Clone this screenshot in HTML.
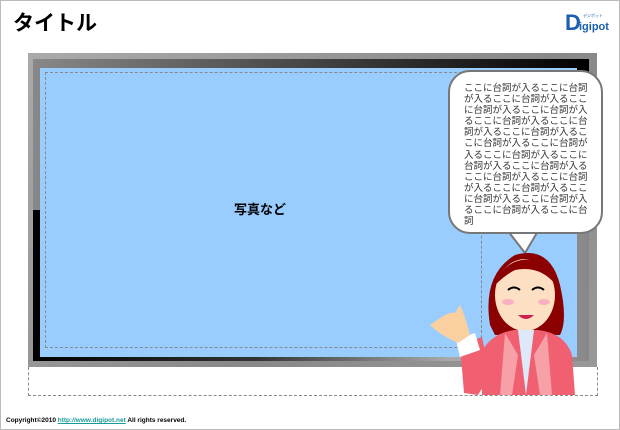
<!DOCTYPE html>
<html><head><meta charset="utf-8"><style>
body{margin:0;width:620px;height:430px;position:relative;overflow:hidden;background:#fff;font-family:"Liberation Sans","Noto Sans CJK JP",sans-serif}
.b{position:absolute;left:0;top:0;width:618px;height:428px;border:1px solid #bbb}
.t{position:absolute;left:13px;top:7px;font-size:21px;font-weight:bold;color:#000}
.frame{position:absolute;left:28px;top:53px;width:569px;height:314px;background:linear-gradient(135deg,#aaa,#888 60%,#999);}
.i1{position:absolute;left:33px;top:59px;width:556px;height:151px;background:linear-gradient(90deg,#888,#444 50%,#000);}
.i2{position:absolute;left:33px;top:210px;width:556px;height:151px;background:linear-gradient(90deg,#000,#333 40%,#aaa 75%,#888)}
.blue{position:absolute;left:40px;top:68px;width:537px;height:289px;background:#99ccff}
.d1{position:absolute;left:45px;top:72px;width:435px;height:274px;border:1px dashed #888}
.d2{position:absolute;left:28px;top:367px;width:568px;height:28px;border:1px dashed #888;border-top:none}
.p{position:absolute;left:234px;top:199px;font-size:13px;font-weight:bold}
.bub{position:absolute;left:448px;top:70px;width:151px;height:160px;background:#fff;border:2px solid #777;border-radius:22px}
.txt{position:absolute;left:464px;top:83px;width:126px;font-size:9.5px;line-height:11.1px;color:#333;word-break:break-all}
.c{position:absolute;left:6px;top:417px;font-size:6.5px;font-weight:bold}
.c span{color:#1a9a9a;text-decoration:underline}
</style></head><body>
<div class="b"></div>
<div class="t">タイトル</div>
<svg style="position:absolute;left:563px;top:6px" width="46" height="30"><text x="2" y="24" font-family="Liberation Sans" font-weight="bold" font-size="22" fill="#1a5fb0">D</text><text x="16" y="24" font-family="Liberation Sans" font-weight="bold" font-size="11" fill="#1a5fb0">igipot</text><text x="20" y="11" font-size="4" fill="#1a5fb0">デジポット</text></svg>
<div class="frame"></div><div class="i1"></div><div class="i2"></div>
<div class="blue"></div><div class="d1"></div><div class="d2"></div>
<div class="p">写真など</div>
<svg style="position:absolute;left:420px;top:225px" width="190" height="175">
<path d="M88 6 L105 28 L118 6 Z" fill="#fff" stroke="#777" stroke-width="2"/>
<rect x="86" y="0" width="34" height="7" fill="#fff"/>
<path d="M70 100 Q62 50 95 30 Q130 20 140 60 Q148 95 140 110 L75 110Z" fill="#8b0000"/>
<ellipse cx="105" cy="70" rx="30" ry="36" fill="#fde0c4"/>
<path d="M75 60 Q85 30 120 35 Q135 45 136 60 Q120 40 95 45 Q85 50 75 60Z" fill="#8b0000"/>
<path d="M88 65 Q94 60 100 65 M112 65 Q118 60 124 65" stroke="#000" stroke-width="2" fill="none"/>
<ellipse cx="88" cy="77" rx="6" ry="3" fill="#f8b0c0"/><ellipse cx="124" cy="77" rx="6" ry="3" fill="#f8b0c0"/>
<path d="M98 90 Q106 98 114 90Z" fill="#d02050"/>
<path d="M60 130 Q70 108 95 105 L118 105 Q145 108 152 130 L155 170 L62 170Z" fill="#f06070"/>
<path d="M98 105 L106 170 L114 105Z" fill="#dde8f8"/>
<path d="M85 108 L98 130 L92 170 L80 170Z M127 108 L114 130 L120 170 L132 170Z" fill="#f8a0a8"/>
<path d="M40 120 L62 112 L70 150 L58 170 L44 168Z" fill="#f06070"/>
<path d="M36 115 L55 108 L60 125 L40 132Z" fill="#fff"/>
<path d="M10 100 Q30 85 35 88 L40 80 Q45 90 50 110 L38 118 Q20 110 10 100Z" fill="#fbd0a0"/>
</svg>
<div class="bub"></div>
<div class="txt">ここに台詞が入るここに台詞が入るここに台詞が入るここに台詞が入るここに台詞が入るここに台詞が入るここに台詞が入るここに台詞が入るここに台詞が入るここに台詞が入るここに台詞が入るここに台詞が入るここに台詞が入るここに台詞が入るここに台詞が入るここに台詞が入るここに台詞が入るここに台詞が入るここに台詞が入るここに台詞</div>
<div class="c">Copyright©2010 <span>http://www.digipot.net</span> All rights reserved.</div>
</body></html>
